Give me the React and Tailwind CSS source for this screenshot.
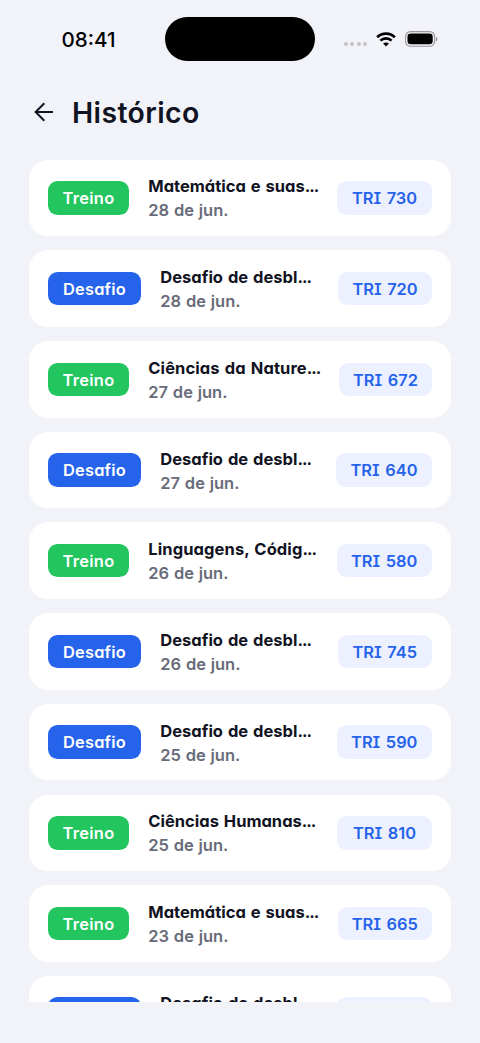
const historico = [
  { tipo: 'treino', titulo: 'Matemática e suas', tracking: 'tracking-[0px]', data: '28 de jun.', tri: 730, largura: 'w-[95px]' },
  { tipo: 'desafio', titulo: 'Desafio de desbl', tracking: 'tracking-[0px]', data: '28 de jun.', tri: 720, largura: 'w-[94px]' },
  { tipo: 'treino', titulo: 'Ciências da Nature', tracking: 'tracking-[0.1px]', data: '27 de jun.', tri: 672, largura: 'w-[93px]' },
  { tipo: 'desafio', titulo: 'Desafio de desbl', tracking: 'tracking-[0px]', data: '27 de jun.', tri: 640, largura: 'w-[96px]' },
  { tipo: 'treino', titulo: 'Linguagens, Códig', tracking: 'tracking-[0.1px]', data: '26 de jun.', tri: 580, largura: 'w-[95.5px]' },
  { tipo: 'desafio', titulo: 'Desafio de desbl', tracking: 'tracking-[0px]', data: '26 de jun.', tri: 745, largura: 'w-[94.5px]' },
  { tipo: 'desafio', titulo: 'Desafio de desbl', tracking: 'tracking-[0px]', data: '25 de jun.', tri: 590, largura: 'w-[95.5px]' },
  { tipo: 'treino', titulo: 'Ciências Humanas', tracking: 'tracking-[0px]', data: '25 de jun.', tri: 810, largura: 'w-[95px]' },
  { tipo: 'treino', titulo: 'Matemática e suas', tracking: 'tracking-[0px]', data: '23 de jun.', tri: 665, largura: 'w-[94.5px]' },
  { tipo: 'desafio', titulo: 'Desafio de desbl', tracking: 'tracking-[0px]', data: '22 de jun.', tri: 690, largura: 'w-[95px]' },
];

const StatusBar = () => (
  <div className="flex h-[78px] shrink-0 items-center">
    <div className="w-[165px] pl-[61.5px] pt-[2px] text-[20.6px] font-medium leading-none text-black">08:41</div>
    <div className="h-[44px] w-[150px] rounded-full bg-black" />
    <div className="flex flex-1 items-center pl-[29px]">
      <div className="mt-[10px] flex gap-[2.4px]">
        <span className="size-[4px] rounded-full bg-[#c3c3c6]" />
        <span className="size-[4px] rounded-full bg-[#c3c3c6]" />
        <span className="size-[4px] rounded-full bg-[#c3c3c6]" />
        <span className="size-[4px] rounded-full bg-[#c3c3c6]" />
      </div>
      <svg className="ml-[8.5px] h-[15px] w-[20px]" viewBox="0 0 20 15" fill="none">
        <path d="M1.2 5.2C6 0.4 14 0.4 18.8 5.2" stroke="#000" strokeWidth="2.7" />
        <path d="M4.4 8.6C7.5 5.6 12.5 5.6 15.6 8.6" stroke="#000" strokeWidth="2.6" />
        <path d="M7.1 11.5C8.7 10 11.3 10 12.9 11.5L10 14.6Z" fill="#000" />
      </svg>
      <svg className="ml-[9px] h-[16px] w-[33px]" viewBox="0 0 33 16" fill="none">
        <rect x="0.6" y="0.6" width="29" height="14.6" rx="4.8" stroke="#97979b" strokeWidth="1.1" />
        <rect x="2.5" y="2.5" width="25.2" height="10.8" rx="3.3" fill="#000" />
        <path d="M31 5.7C32.8 6.5 32.8 9.7 31 10.5Z" fill="#8c8c90" />
      </svg>
    </div>
  </div>
);

const Item = ({ item }) => {
  const treino = item.tipo === 'treino';
  return (
    <li className="flex h-[76.5px] shrink-0 items-center rounded-[19px] bg-white px-[19px]">
      <span
        className={`flex h-[33.5px] shrink-0 items-center justify-center rounded-[9.5px] pt-px text-[16.4px] font-semibold text-white ${
          treino ? 'w-[81px] bg-[#22c55e] tracking-[0.3px]' : 'w-[93px] bg-[#2563eb] tracking-[0.2px]'
        }`}
      >
        {treino ? 'Treino' : 'Desafio'}
      </span>
      <div className="ml-[19.3px] min-w-0 flex-1 whitespace-nowrap pt-px">
        <p className={`text-[16.5px] font-[650] leading-[24px] text-[#111322] [word-spacing:1px] ${item.tracking}`}>
          {item.titulo}
          <span className="tracking-[-1px]">...</span>
        </p>
        <p className="text-[16.5px] font-semibold leading-[24px] text-[#686b79] [word-spacing:0.6px]">{item.data}</p>
      </div>
      <span className={`flex h-[33.5px] shrink-0 items-center justify-center rounded-[9.5px] bg-[#edf1ff] pt-px text-[16.4px] font-semibold text-[#2563eb] [word-spacing:1.5px] ${item.largura}`}>
        TRI {item.tri}
      </span>
    </li>
  );
};

export default function Historico() {
  return (
    <div className="flex h-[1043px] w-[480px] flex-col overflow-hidden bg-[#f2f3f8] font-['Inter','Liberation_Sans',sans-serif]">
      <StatusBar />
      <div className="flex min-h-0 flex-1 flex-col [font-feature-settings:'cv08','cv11']">
        <header className="flex h-[68px] shrink-0 items-center pl-[34px]">
          <svg className="h-[20px] w-[20px]" viewBox="0 0 20 20" fill="none" stroke="#111322" strokeWidth="2">
            <path d="M10.3 1.2L1.6 10L10.3 18.8M1.6 10H19" />
          </svg>
          <h1 className="ml-[18px] pt-[3px] text-[28.4px] font-[630] leading-none tracking-[0.4px] text-[#111322]">Histórico</h1>
        </header>
        <main className="mt-[13.7px] flex h-[842.3px] shrink-0 flex-col overflow-hidden px-[29px]">
          <ul className="flex flex-col gap-[14.2px]">
            {historico.map((item, i) => (
              <Item key={i} item={item} />
            ))}
          </ul>
        </main>
      </div>
    </div>
  );
}
